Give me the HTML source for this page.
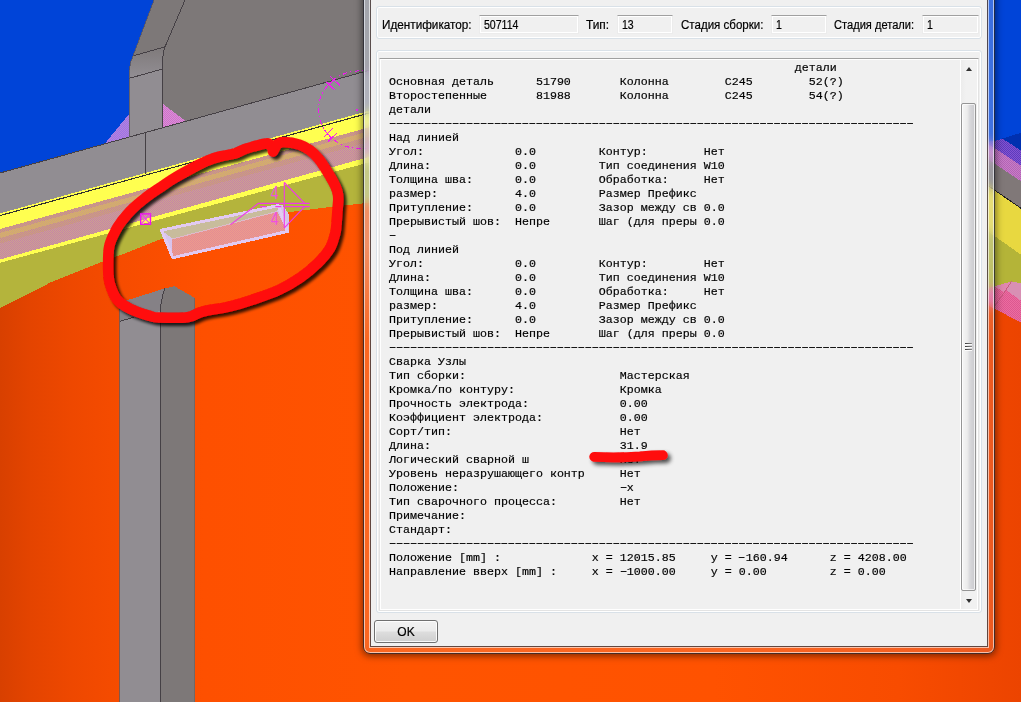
<!DOCTYPE html>
<html lang="ru">
<head>
<meta charset="utf-8">
<title>Сварка</title>
<style>
html,body{margin:0;padding:0;}
body{width:1021px;height:702px;overflow:hidden;position:relative;background:#ff5200;font-family:"Liberation Sans",sans-serif;}
#scene{position:absolute;left:0;top:0;width:1021px;height:702px;}
#win{position:absolute;left:363px;top:-30px;width:632px;height:684px;border-radius:7px;
  box-shadow:0 1px 7px 1px rgba(0,0,0,.5);}
#frame{position:absolute;left:0;top:0;right:0;bottom:0;border-radius:7px;overflow:hidden;box-sizing:border-box;
  border:1px solid rgba(38,38,46,.85);
  -webkit-backdrop-filter:blur(5px);backdrop-filter:blur(5px);
  box-shadow:inset 0 0 0 1px rgba(255,255,255,.62);}
#frame i{position:absolute;display:block;}
#frame .tl{left:0;top:0;width:8px;bottom:0;background:linear-gradient(180deg,rgba(222,233,250,.40) 0,rgba(222,233,250,.40) 40%,rgba(222,233,250,.13) 54%,rgba(222,233,250,.13) 100%);}
#frame .tr{right:0;top:0;width:8px;bottom:0;background:linear-gradient(180deg,rgba(222,233,250,.26) 0,rgba(222,233,250,.30) 40%,rgba(222,233,250,.13) 54%,rgba(222,233,250,.13) 100%);}
#frame .tb{left:8px;right:8px;bottom:0;height:8px;background:rgba(222,233,250,.13);}
#client{position:absolute;left:371px;top:0;width:616px;height:646px;background:#f0f0f0;
  box-shadow:0 0 0 1px rgba(52,36,34,.78),0 0 0 2px rgba(255,255,255,.62);}
.gb{position:absolute;border:1px solid #d9e1e8;border-radius:3px;box-shadow:inset 0 0 0 1px #fff;box-sizing:border-box;}
.lbl{position:absolute;font-size:12px;color:#000;-webkit-text-stroke:.2px #000;white-space:nowrap;line-height:14px;top:18px;transform-origin:0 0;transform:scaleX(.977);}
.ed{position:absolute;top:15px;height:19px;box-sizing:border-box;border:1px solid #ececec;border-top-color:#a0a0a0;-webkit-text-stroke:.2px #000;background:#f0f0f0;
  font-size:12px;line-height:14px;padding:2px 0 0 4px;box-shadow:inset 0 0 0 1px #fff;}
.ed span{display:inline-block;transform:scaleX(.88);transform-origin:0 0;}
#ta{position:absolute;left:379px;top:58px;width:600px;height:553px;box-sizing:border-box;background:#f0f0f0;
  border:1px solid #e3e3e3;border-top-color:#a0a0a0;box-shadow:inset 0 0 0 1px #fff;}
#txt{position:absolute;left:389px;top:61.3px;margin:0;font-family:"Liberation Mono",monospace;font-size:11.667px;line-height:16px;color:#000;white-space:pre;-webkit-text-stroke:0.18px #000;transform:scaleY(.875);transform-origin:0 0;}
#sb{position:absolute;left:960px;top:60px;width:17px;height:549px;background:linear-gradient(90deg,#fff 0,#fff 1px,#ececec 1px,#f1f1f1 6px,#f1f1f1 100%);}
#th{position:absolute;left:961px;top:103px;width:15px;height:488px;box-sizing:border-box;border:1px solid #959595;border-radius:2px;
  background:linear-gradient(90deg,#f6f6f6 0%,#ececec 40%,#d9d9dc 60%,#c9c9cd 100%);box-shadow:inset 0 0 0 1px rgba(255,255,255,.7);}
.gr{position:absolute;left:965px;width:7px;height:1px;background:linear-gradient(90deg,#3a3a3a,#8a8a8a);box-shadow:0 1px 0 rgba(255,255,255,.9);}
.ar{position:absolute;left:966px;width:0;height:0;border-left:3.5px solid transparent;border-right:3.5px solid transparent;}
.dl{display:inline-block;position:relative;top:-0.9px;left:-2.3px;transform:scaleX(1.6);transform-origin:0 0;letter-spacing:-2.625px;-webkit-text-stroke:0.35px #000;}
.hy{margin-right:2.625px;}
#ok{position:absolute;left:374px;top:620px;width:64px;height:23px;box-sizing:border-box;border:1px solid #707070;border-radius:3px;
  background:linear-gradient(#f2f2f2 0%,#ebebeb 48%,#dddddd 52%,#cfcfcf 100%);box-shadow:inset 0 0 0 1px rgba(255,255,255,.85);
  font-size:12px;line-height:22px;text-align:center;color:#000;-webkit-text-stroke:.2px #000;}
</style>
</head>
<body>
<svg id="scene" width="1021" height="702" viewBox="0 0 1021 702">
<defs>
<linearGradient id="og" x1="0" y1="0" x2="1021" y2="0" gradientUnits="userSpaceOnUse">
<stop offset="0" stop-color="#d84000"/><stop offset="0.03" stop-color="#e44400"/><stop offset="0.07" stop-color="#ee4800"/><stop offset="0.12" stop-color="#f64c00"/><stop offset="0.2" stop-color="#fe5000"/>
<stop offset="0.4" stop-color="#ff5400"/><stop offset="0.7" stop-color="#ff5200"/><stop offset="0.88" stop-color="#f84c00"/><stop offset="1" stop-color="#ec4400"/>
</linearGradient>
<pattern id="d1" width="2" height="2" patternUnits="userSpaceOnUse"><rect width="2" height="2" fill="#cea676"/><rect width="1" height="1" fill="#c4849c"/><rect x="1" y="1" width="1" height="1" fill="#c4849c"/></pattern>
<pattern id="d2" width="2" height="2" patternUnits="userSpaceOnUse"><rect width="2" height="2" fill="#cca290"/><rect width="1" height="1" fill="#c684a6"/><rect x="1" y="1" width="1" height="1" fill="#c684a6"/></pattern>
<pattern id="d3" width="2" height="2" patternUnits="userSpaceOnUse"><rect width="2" height="2" fill="#9c72e6"/><rect width="1" height="1" fill="#b484dc"/><rect x="1" y="1" width="1" height="1" fill="#b484dc"/></pattern>
<pattern id="d4" width="2" height="2" patternUnits="userSpaceOnUse"><rect width="2" height="2" fill="#d890d8"/><rect width="1" height="1" fill="#d070c8"/><rect x="1" y="1" width="1" height="1" fill="#d070c8"/></pattern>
<pattern id="d5" width="2" height="2" patternUnits="userSpaceOnUse"><rect width="2" height="2" fill="#ec9c8c"/><rect width="1" height="1" fill="#e48c94"/><rect x="1" y="1" width="1" height="1" fill="#e48c94"/></pattern>
<filter id="sh" filterUnits="userSpaceOnUse" x="80" y="120" width="290" height="220"><feGaussianBlur in="SourceAlpha" stdDeviation="1.7"/><feOffset dx="2.6" dy="2.6"/><feComponentTransfer><feFuncA type="linear" slope="0.8"/></feComponentTransfer><feMerge><feMergeNode/><feMergeNode in="SourceGraphic"/></feMerge></filter>
<pattern id="d6" width="2" height="2" patternUnits="userSpaceOnUse"><rect width="2" height="2" fill="#8452d2"/><rect width="1" height="1" fill="#5c3cbc"/><rect x="1" y="1" width="1" height="1" fill="#5c3cbc"/></pattern>
<pattern id="d7" width="2" height="2" patternUnits="userSpaceOnUse"><rect width="2" height="2" fill="#c87cc8"/><rect width="1" height="1" fill="#b264b4"/><rect x="1" y="1" width="1" height="1" fill="#b264b4"/></pattern>
<pattern id="d8" width="2" height="2" patternUnits="userSpaceOnUse"><rect width="2" height="2" fill="#ec6ca0"/><rect width="1" height="1" fill="#dc5890"/><rect x="1" y="1" width="1" height="1" fill="#dc5890"/></pattern>
<linearGradient id="cg" x1="0" y1="48" x2="0" y2="76" gradientUnits="userSpaceOnUse"><stop offset="0" stop-color="#7f7a7b"/><stop offset="1" stop-color="#918d92"/></linearGradient>
</defs>
<g shape-rendering="crispEdges">
<!-- sky -->
<rect x="0" y="0" width="1021" height="702" fill="#0044d8"/>
<!-- orange cylinder -->
<path d="M0 308 L50.7 282.4 L101.5 262 L130 251.5 L161 239 L200 228.5 L240 220.5 L288 212.3 L332 206.8 L363 203.4 L372 202.6 L395 200.8 L1021 203 L1021 702 L0 702Z" fill="url(#og)"/>
<!-- olive band -->
<path d="M0 259.5 L395 149.7 L395 200.8 L372 202.6 L363 203.4 L332 206.8 L288 212.3 L240 220.5 L200 228.5 L161 239 L130 251.5 L101.5 262 L50.7 282.4 L0 308Z" fill="#b4b43c"/>
<!-- lower yellow line -->
<path d="M0 259.3 L395 149.7 L395 155.3 L0 262.8Z" fill="#ffff50"/>
<!-- pink hatched band -->
<path d="M0 229 L395 120.2 L395 135.2 L0 244Z" fill="url(#d1)"/>
<path d="M0 243.5 L395 134.7 L395 149.7 L0 259.5Z" fill="url(#d2)"/>
<path d="M0 235.5 L395 126.7" stroke="#e0c850" stroke-opacity=".42" stroke-width="5" fill="none"/>
<!-- upper yellow band -->
<path d="M0 213.4 L395 103.5 L395 120.2 L0 229Z" fill="#ffff50"/>
<path d="M0 215.6 L395 105.8" stroke="#303030" stroke-width="1.1" fill="none"/>
<!-- beam -->
<path d="M0 173 L395 63.1 L395 103.5 L0 213.4Z" fill="#918d92"/>
<!-- column back big face -->
<path d="M185 0 L395 0 L395 63.1 L162.5 127.8 L162.5 60 Q163 52 165 46.8Z" fill="#7d7878"/>
<!-- column side (left dark) -->
<path d="M154 0 L185 0 L165 46.8 L133 56Z" fill="#7d7878"/>
<!-- chamfer -->
<path d="M133 56 L165 46.8 Q163 52 162.5 69 L129 78.4 Q129 64 133 56Z" fill="url(#cg)"/>
<!-- column front -->
<path d="M129 78.4 L162.5 69 L162.5 127.8 L129 137Z" fill="#918d92"/>
<!-- triangles -->
<path d="M105 143.5 L129 114 L129 137Z" fill="url(#d3)"/>
<path d="M162.5 103.5 L185.5 121 L162.5 127.8Z" fill="url(#d4)"/>
<!-- edge lines -->
<g stroke="#454045" stroke-width="1" fill="none">
<path d="M0 173 L395 63.1"/>
<path d="M185 0 L165 46.8 Q163 52 162.5 60 L162.5 127.8"/>
<path d="M133 56 L165 46.8"/>
<path d="M129 78.4 L162.5 69"/>
<path d="M154 0 L133 56 Q129 64 129 78.4 L129 137" stroke="#5a5660" stroke-width=".8"/>
<path d="M145.6 132.5 L145.6 173.5"/>
</g>
<!-- lower column -->
<path d="M119.5 702 L119.5 305 L125 300.9 L164.7 288.5 Q161.5 298 160.2 311 L160.2 702Z" fill="#918d92"/>
<path d="M125 300.9 L164.7 288.5 Q161.5 298 160.5 311 L133.9 317.3 L119.5 321.4 L119.5 305Z" fill="#858186"/>
<path d="M160.2 702 L160.2 311 Q161.5 298 164.7 288.5 L174.3 286.2 L194.9 298 L194.9 702Z" fill="#7d7878"/>
<g stroke="#454045" stroke-width="1" fill="none">
<path d="M160.2 702 L160.2 311 Q161.5 298 164.7 288.5"/>
<path d="M119.5 321.4 L133.9 317.3"/>
<path d="M119.5 702 L119.5 305" stroke="#605c60" stroke-width="0.8"/>
<path d="M194.9 702 L194.9 298" stroke="#6a6464" stroke-width="0.8"/>
</g>
<!-- weld box -->
<path d="M160.6 229.6 L278.9 204.8 L277 211.4 L172.3 238.6Z" fill="#c8bc9c"/>
<path d="M172.3 238.6 L277 211.4 L287.5 231.9 L172.3 258.5Z" fill="url(#d5)"/>
<path d="M160.6 229.6 L172.3 238.6 L172.3 258.5Z" fill="#d8c4ec"/>
<path d="M277 211.4 L278.9 204.8 L282 204.5 L288.8 214 L288.8 231.8 L287.5 231.9Z" fill="#d6c4e6"/>
<path d="M279.5 206 L286.5 229" stroke="#b8a8c8" stroke-width="1.6" fill="none"/>
<path d="M161.4 230.2 L278.3 205.6 L287.6 231.4 L172.8 257.7Z" fill="none" stroke="#e2caf2" stroke-width="3" stroke-linejoin="round"/>
<path d="M172.3 239 L276.8 211.6" fill="none" stroke="#dcc8e4" stroke-width="1" opacity=".7"/>
<!-- dashed circle -->
<g stroke="#f418f4" stroke-width="1" fill="none">
<ellipse cx="359.7" cy="109.7" rx="41.2" ry="38.8" stroke-dasharray="5 3 1.2 3"/>
<path d="M330 76 L340.2 85.7 M325.8 81.6 L335.4 90.5 M325.1 87.8 L336.1 78.2"/>
<path d="M323.8 137.3 L332.7 128.4 M327.9 141.4 L337.5 132.5 M324.4 129.8 L332 138.7"/>
<rect x="356" y="109" width="2" height="2" fill="#f020f0" stroke="none"/>
</g>
<!-- right strip -->
<g>
<rect x="962" y="0" width="59" height="210" fill="#0044d8"/>
<path d="M1002.4 138.5 L1021 132.8 L1021 150.6Z" fill="#0030b0"/>
<path d="M985 142.2 L994 141 L998.8 140 L1002.4 138.5 L1021 150.6 L1021 166 L994 148.3 L985 142.4Z" fill="url(#d6)"/>
<path d="M962 126.8 L985 141.9 L994 147.8 L1021 165.5 L1021 181.5 L985 157.4 L962 142.0Z" fill="url(#d7)"/>
<path d="M962 142.0 L985 157.4 L1021 181.5 L1021 208.3 L985 183.5 L962 167.7Z" fill="#807878"/>
<path d="M962 167.7 L985 183.5 L1021 208.3 L1021 254.8 L985 229.2 L962 212.8Z" fill="#e8d840"/>
<path d="M962 167.7 L1021 208.3" stroke="#202020" stroke-width="1" fill="none"/>
<path d="M962 212.8 L985 229.2 L1021 254.8 L1021 283.5 L1011.6 281.4 L985 289 L967 294 L962 294Z" fill="#b4b438"/>
<path d="M967 294 L985 289 L1011.6 281.4 L1021 283.5 L1021 322.7 L985 303.6Z" fill="url(#d8)"/>
<path d="M1011.6 281.4 L1021 283.5 L1021 300.6 L1006 290Z" fill="#d890b4"/>
<path d="M994 286.4 L1011.6 281.4 L1004 292Z" fill="#e088b0"/>
<path d="M1011.6 281.4 L995.2 305.6" stroke="#c05878" stroke-width="0.8" fill="none"/>
</g>
</g>
<!-- red hand-drawn ellipse -->
<g filter="url(#sh)">
<path d="M273.0 151.5 C273.8 150.2 275.7 145.6 277.5 144.0 C279.3 142.4 280.3 141.9 284.0 142.0 C287.7 142.1 295.4 143.3 299.7 144.7 C304.0 146.1 306.8 147.9 310.0 150.3 C313.2 152.7 316.1 155.8 318.9 159.1 C321.6 162.4 324.1 166.6 326.5 170.4 C328.9 174.2 331.5 178.7 333.3 182.1 C335.1 185.5 336.4 188.2 337.2 191.0 C338.0 193.8 338.3 195.7 338.3 199.0 C338.3 202.3 337.7 206.5 337.4 211.0 C337.1 215.5 336.7 222.1 336.3 226.0 C335.9 229.9 336.1 230.4 335.0 234.2 C333.9 238.0 332.7 243.8 329.8 248.6 C326.9 253.4 322.5 258.5 317.6 263.3 C312.7 268.1 306.6 273.2 300.2 277.6 C293.8 282.0 287.2 286.0 279.2 289.7 C271.2 293.4 260.6 296.9 252.4 299.7 C244.2 302.5 238.4 304.3 230.0 306.3 C221.6 308.3 208.8 310.0 201.7 311.8 C194.6 313.6 194.6 316.4 187.4 317.3 C180.2 318.2 164.8 317.7 158.6 317.5 C152.4 317.3 155.0 317.4 150.3 316.0 C145.6 314.6 136.1 311.8 130.5 309.0 C125.0 306.2 120.5 303.7 117.0 299.5 C113.5 295.3 111.3 288.6 109.8 283.7 C108.3 278.8 108.3 276.2 108.2 270.0 C108.1 263.8 107.9 253.2 109.2 246.5 C110.5 239.8 114.0 233.8 116.2 229.5 C118.4 225.2 119.6 223.9 122.2 220.5 C124.8 217.1 128.2 213.1 132.0 209.3 C135.8 205.5 141.0 201.2 145.3 197.9 C149.6 194.6 152.7 192.5 157.6 189.2 C162.5 185.9 168.7 181.5 174.5 178.0 C180.3 174.5 187.0 170.9 192.4 168.0 C197.8 165.1 202.2 162.7 206.8 160.8 C211.4 158.9 215.1 157.7 219.8 156.5 C224.5 155.3 230.7 154.7 235.0 153.4 C239.3 152.1 240.4 150.5 245.6 148.8 C250.8 147.1 261.9 143.9 266.1 143.4 C270.3 142.9 270.2 145.6 271.0 146.0" fill="none" stroke="#ff0a0a" stroke-width="10.6" stroke-linecap="round" stroke-linejoin="round"/>
</g>
<!-- magenta marks -->
<g stroke="#f038e8" stroke-width="1.1" fill="none">
<rect x="140.7" y="213.9" width="9.8" height="10.4" stroke-width="1.4" stroke="#f010f0"/>
<path d="M141 214.4 L150.2 223.8 M150.2 214.4 L141 223.8" stroke="#f040f0"/>
<path d="M230.5 224.6 L258.4 203.4 L309.7 203.4"/>
<path d="M259.9 206.6 H266.4 M275.3 206.6 H281.3 M283.8 206.6 H309.7"/>
<path d="M284.3 182.5 V227.8"/>
<path d="M284.3 182.5 L304.7 203.4"/>
<path d="M304.7 206.6 L284.3 227.8"/>
</g>
<text x="270.7" y="199" font-family="Liberation Sans, sans-serif" font-size="18" fill="#f050e0" transform="translate(270.7 0) scale(0.78 1) translate(-270.7 0)">4</text>
<text x="270.7" y="224.8" font-family="Liberation Sans, sans-serif" font-size="18" fill="#f050e0" transform="translate(270.7 0) scale(0.78 1) translate(-270.7 0)">4</text>

</svg>

<div id="win"><div id="frame"><i class="tl"></i><i class="tr"></i><i class="tb"></i></div></div>
<div id="client"></div>

<div class="gb" style="left:376px;top:6px;width:606px;height:33px;"></div>
<div class="lbl" style="left:382px;">Идентификатор:</div>
<div class="ed" style="left:479px;width:100px;"><span>507114</span></div>
<div class="lbl" style="left:586.3px;transform:scaleX(.99);">Тип:</div>
<div class="ed" style="left:617px;width:56px;"><span>13</span></div>
<div class="lbl" style="left:680.5px;transform:scaleX(.962);">Стадия сборки:</div>
<div class="ed" style="left:771px;width:56px;"><span>1</span></div>
<div class="lbl" style="left:834px;transform:scaleX(.925);">Стадия детали:</div>
<div class="ed" style="left:922px;width:57px;"><span>1</span></div>

<div class="gb" style="left:376px;top:50px;width:606px;height:563px;"></div>
<div id="ta"></div>
<div id="sb"></div>
<div class="ar" style="top:67px;border-bottom:4px solid #303030;"></div>
<div id="th"></div>
<div class="gr" style="top:343px;"></div><div class="gr" style="top:346px;"></div><div class="gr" style="top:349px;"></div>
<div class="ar" style="top:599px;border-top:4px solid #303030;"></div>
<pre id="txt">                                                          детали
Основная деталь      51790       Колонна        C245        52(?)
Второстепенные       81988       Колонна        C245        54(?)
детали
<span class="dl">---------------------------------------------------------------------------</span>
Над линией
Угол:             0.0         Контур:        Нет
Длина:            0.0         Тип соединения W10
Толщина шва:      0.0         Обработка:     Нет
размер:           4.0         Размер Префикс
Притупление:      0.0         Зазор между св 0.0
Прерывистый шов:  Непре       Шаг (для преры 0.0
<span class="dl">-</span>
Под линией
Угол:             0.0         Контур:        Нет
Длина:            0.0         Тип соединения W10
Толщина шва:      0.0         Обработка:     Нет
размер:           4.0         Размер Префикс
Притупление:      0.0         Зазор между св 0.0
Прерывистый шов:  Непре       Шаг (для преры 0.0
<span class="dl">---------------------------------------------------------------------------</span>
Сварка Узлы
Тип сборки:                      Мастерская
Кромка/по контуру:               Кромка
Прочность электрода:             0.00
Коэффициент электрода:           0.00
Сорт/тип:                        Нет
Длина:                           31.9
Логический сварной ш             Нет
Уровень неразрушающего контр     Нет
Положение:                       <span class="dl hy">-</span>x
Тип сварочного процесса:         Нет
Примечание:
Стандарт:
<span class="dl">---------------------------------------------------------------------------</span>
Положение [mm] :             x = 12015.85     y = <span class="dl hy">-</span>160.94      z = 4208.00
Направление вверх [mm] :     x = <span class="dl hy">-</span>1000.00     y = 0.00         z = 0.00
</pre>
<svg id="mark" width="140" height="40" viewBox="570 435 140 40" style="position:absolute;left:570px;top:435px;">
<defs><filter id="sh2" filterUnits="userSpaceOnUse" x="570" y="435" width="140" height="40"><feGaussianBlur in="SourceAlpha" stdDeviation="2"/><feOffset dx="3" dy="3"/><feComponentTransfer><feFuncA type="linear" slope="0.7"/></feComponentTransfer><feMerge><feMergeNode/><feMergeNode in="SourceGraphic"/></feMerge></filter></defs>
<path d="M594.2 456.8 C610 457.6 625 457.4 640 456.4 C648 455.6 656 455.2 662.8 455.2" fill="none" stroke="#ff0a0a" stroke-width="9.8" stroke-linecap="round" filter="url(#sh2)"/>
</svg>
<div id="ok">OK</div>
</body>
</html>
